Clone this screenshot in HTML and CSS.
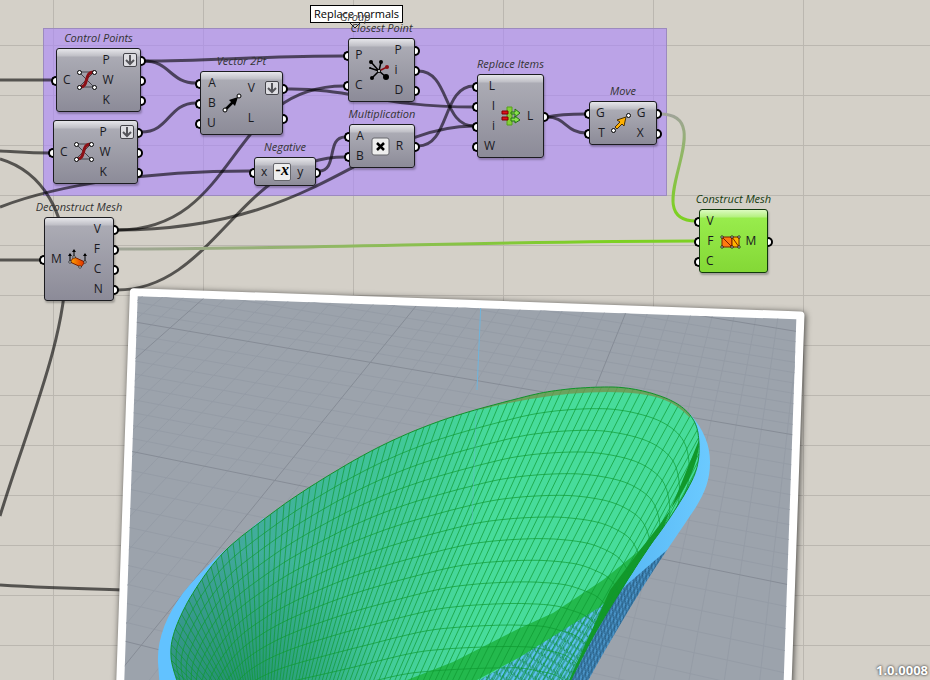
FILE: index.html
```html
<!DOCTYPE html>
<html lang="en">
<head>
    <meta charset="UTF-8">
    <meta name="viewport" content="width=device-width, initial-scale=1.0">
    <title>Replace normals</title>
    <link rel="stylesheet" href="styles.css">
</head>
<body>
    <main class="canvas">
        <div class="group"></div>

        <svg class="wires" aria-hidden="true">
            <defs>
                <linearGradient id="fade-vertices" gradientUnits="userSpaceOnUse" x1="661" y1="114" x2="680" y2="210">
                    <stop offset="0" stop-color="#a0a29b"/>
                    <stop offset="1" stop-color="#7dd023"/>
                </linearGradient>
                <linearGradient id="fade-faces" gradientUnits="userSpaceOnUse" x1="118" y1="0" x2="600" y2="0">
                    <stop offset="0" stop-color="#a0a498"/>
                    <stop offset="1" stop-color="#7dd023"/>
                </linearGradient>
            </defs>
            <path d="M0 80H52"/>
            <path d="M0 151C20 152 30 153 49 153"/>
            <path d="M0 159C44 172 66 215 66 265C66 340 26 430 0 516"/>
            <path d="M0 207C60 184 150 171 250 171"/>
            <path d="M0 260H40"/>
            <path d="M0 585C50 588 90 589 122 590"/>
            <path d="M144 61C210 61 260 56 344 56"/>
            <path d="M144 61C170 61 170 83 196 83"/>
            <path d="M141 132C170 132 168 103 196 103"/>
            <path d="M287 89C350 88 380 107 474 107"/>
            <path d="M117 230C240 230 226 86 344 86"/>
            <path d="M117 230C320 230 370 126 474 126"/>
            <path d="M117 290C215 290 240 157 345 157"/>
            <path d="M319 171C338 171 326 137 345 137"/>
            <path d="M418 71C450 71 442 126 474 126"/>
            <path d="M418 146C450 146 442 86 474 86"/>
            <path d="M547 117C560 114 572 114 586 114"/>
            <path d="M547 117C566 117 566 133 586 133"/>
            <path class="to-vertices" d="M660 114C724 114 634 221 696 221"/>
            <path class="to-faces" d="M117 249C310 249 500 241 696 241"/>
        </svg>

        <article class="node second-points" aria-label="Control Points">
            <ul class="inputs"><li>C</li></ul>
            <svg class="icon" viewBox="0 0 20 20"><use href="#icon-points"/></svg>
            <ul class="outputs">
                <li>P <span class="flatten"><svg viewBox="0 0 12 12"><use href="#icon-down"/></svg></span></li>
                <li>W</li>
                <li>K</li>
            </ul>
        </article>

        <article class="node control-points">
            <h2>Control Points</h2>
            <ul class="inputs"><li>C</li></ul>
            <svg class="icon" viewBox="0 0 20 20">
                <g id="icon-points">
                    <path d="M2 2H17L2 17H17M2 2L17 17" fill="none" stroke="#44444a"/>
                    <path d="M2 17C13 18 6 2 17 2" fill="none" stroke="#8c1016" stroke-width="3"/>
                    <g fill="#fff" stroke="#000"><circle cx="2.500" cy="2.500" r="2"/><circle cx="17.500" cy="2.500" r="2"/><circle cx="2.500" cy="17.500" r="2"/><circle cx="17.500" cy="17.500" r="2"/></g>
                </g>
            </svg>
            <ul class="outputs">
                <li>P <span class="flatten"><svg viewBox="0 0 12 12"><path id="icon-down" d="M6 1V10M2 6L6 10L10 6" fill="none" stroke="#55555a" stroke-width="2"/></svg></span></li>
                <li>W</li>
                <li>K</li>
            </ul>
        </article>

        <article class="node vector">
            <h2>Vector 2Pt</h2>
            <ul class="inputs"><li>A</li><li>B</li><li>U</li></ul>
            <svg class="icon" viewBox="0 0 20 20">
                <path d="M3 17L12 8" stroke="#000" stroke-width="2.500"/>
                <path d="M7 7L16 4L13 13Z"/>
                <g fill="#fff" stroke="#000"><circle cx="3" cy="17" r="2"/><circle cx="17" cy="3" r="2"/></g>
            </svg>
            <ul class="outputs">
                <li>V <span class="flatten"><svg viewBox="0 0 12 12"><use href="#icon-down"/></svg></span></li>
                <li>L</li>
            </ul>
        </article>

        <article class="node negative">
            <h2>Negative</h2>
            <ul class="inputs"><li>x</li></ul>
            <span class="key">-x</span>
            <ul class="outputs"><li>y</li></ul>
        </article>

        <article class="node closest">
            <h2>Closest Point</h2>
            <ul class="inputs"><li>P</li><li>C</li></ul>
            <svg class="icon" viewBox="0 0 20 20">
                <path d="M10 11L2 2M10 11L12 2M10 11L1 8M10 11L3 18M10 11L17 17" stroke="#000" stroke-width="1.500"/>
                <path d="M10 11L18 7" stroke="#8c1016" stroke-width="1.500"/>
                <circle cx="2" cy="2" r="2"/><circle cx="12" cy="2" r="2"/><circle cx="1" cy="8" r="1"/><circle cx="3" cy="18" r="2"/><circle cx="17" cy="17" r="3"/>
                <circle cx="18" cy="7" r="2" fill="#8c1016"/>
                <circle cx="10" cy="11" r="1.500" fill="#fff" stroke="#000"/>
            </svg>
            <ul class="outputs"><li>P</li><li>i</li><li>D</li></ul>
        </article>

        <article class="node multiply">
            <h2>Multiplication</h2>
            <ul class="inputs"><li>A</li><li>B</li></ul>
            <svg class="icon" viewBox="0 0 20 20">
                <rect x="2" y="2" width="17" height="17" rx="2" fill="#eee" stroke="#66666c"/>
                <path d="M7 7L14 14M14 7L7 14" stroke="#000" stroke-width="2.500"/>
            </svg>
            <ul class="outputs"><li>R</li></ul>
        </article>

        <article class="node replace">
            <h2>Replace Items</h2>
            <ul class="inputs"><li>L</li><li>I</li><li>i</li><li>W</li></ul>
            <svg class="icon" viewBox="0 0 20 20">
                <path d="M6 1H11V19H6Z" fill="#86cf35" stroke="#55a01c"/>
                <path d="M10 6H14V3L19 7L14 11V8H10ZM10 12H14V10L19 14L14 17V15H10Z" fill="#8ae04c" stroke="#237012"/>
                <path d="M1 5H7V8H1ZM1 11H7V14H1Z" fill="#e0101c" stroke="#800000"/>
            </svg>
            <ul class="outputs"><li>L</li></ul>
        </article>

        <article class="node move">
            <h2>Move</h2>
            <ul class="inputs"><li>G</li><li>T</li></ul>
            <svg class="icon" viewBox="0 0 20 20">
                <path d="M4 14L9 9L6 7L15 4L13 13L11 11L6 16Z" fill="#ffb000" stroke="#4a3000"/>
                <g fill="#fff" stroke="#000"><circle cx="2.500" cy="17.500" r="2"/><circle cx="17.500" cy="2.500" r="2"/></g>
            </svg>
            <ul class="outputs"><li>G</li><li>X</li></ul>
        </article>

        <article class="node construct">
            <h2>Construct Mesh</h2>
            <ul class="inputs"><li>V</li><li>F</li><li>C</li></ul>
            <svg class="icon" viewBox="0 0 20 20">
                <path d="M2 6H12V16H2Z" fill="#ff7a10" stroke="#7a2000"/>
                <path d="M12 6H19V16H12Z" fill="#ffb400" stroke="#7a2000"/>
                <path d="M2 6L12 16M12 6L19 16" stroke="#7a2000"/>
                <path d="M1 5H3V7H1ZM11 5H13V7H11ZM18 5H20V7H18ZM1 15H3V17H1ZM11 15H13V17H11ZM18 15H20V17H18Z" fill="#fff" stroke="#000" stroke-width=".700"/>
            </svg>
            <ul class="outputs"><li>M</li></ul>
        </article>

        <article class="node deconstruct">
            <h2>Deconstruct Mesh</h2>
            <ul class="inputs"><li>M</li></ul>
            <svg class="icon" viewBox="0 0 20 20">
                <defs>
                    <linearGradient id="ember"><stop offset="0" stop-color="#ffa800"/><stop offset="1" stop-color="#e02800"/></linearGradient>
                </defs>
                <path d="M2 13L6 8L17 13L13 18Z" fill="url(#ember)" stroke="#7a2000"/>
                <path d="M2 13V5M6 8V1M17 13V5" stroke="#000"/>
                <path d="M0 7L2 4L4 7ZM4 3L6 0L8 3ZM15 7L17 4L19 7Z"/>
                <g fill="#fff" stroke="#000" stroke-width=".700"><circle cx="2" cy="13" r="1.200"/><circle cx="6" cy="8" r="1.200"/><circle cx="17" cy="13" r="1.200"/><circle cx="12" cy="18" r="1.200"/></g>
            </svg>
            <ul class="outputs"><li>V</li><li>F</li><li>C</li><li>N</li></ul>
        </article>

        <p class="note">Replace normals</p>
        <svg class="note-tip" viewBox="0 0 12 8" aria-hidden="true"><path d="M1 1L6 6L11 1" fill="none" stroke="#222"/></svg>
        <p class="group-name">Group</p>

        <figure class="preview">
            <svg class="viewport" role="img" aria-label="Offset mesh in the perspective view">
                <defs>
                    <linearGradient id="skin" gradientUnits="userSpaceOnUse" x1="190" y1="560" x2="480" y2="600">
                        <stop offset="0" stop-color="#439f9f"/>
                        <stop offset=".5" stop-color="#3fbf98"/>
                        <stop offset="1" stop-color="#47dc9b"/>
                    </linearGradient>
                    <radialGradient id="throat" gradientUnits="userSpaceOnUse" cx="235" cy="700" r="150">
                        <stop offset="0" stop-color="#0c7d4c" stop-opacity=".6"/>
                        <stop offset="1" stop-color="#0c7d4c" stop-opacity="0"/>
                    </radialGradient>
                    <linearGradient id="shell" gradientUnits="userSpaceOnUse" x1="600" y1="0" x2="712" y2="0">
                        <stop offset="0" stop-color="#52b4f2"/>
                        <stop offset="1" stop-color="#6ccaff"/>
                    </linearGradient>
                    <pattern id="weave" width="4" height="6" patternUnits="userSpaceOnUse" patternTransform="rotate(28)">
                        <path d="M1 0V6M0 0L4 6" stroke="#23577c" stroke-width="1"/>
                    </pattern>
                    <pattern id="hatch" width="4" height="8" patternUnits="userSpaceOnUse" patternTransform="rotate(32)">
                        <path d="M1 0V8M0 2L4 5" stroke="#128a4c" stroke-width="1"/>
                    </pattern>
                    <clipPath id="rim-clip"><path id="rim-shape"/></clipPath>
                </defs>
                <!-- undo the frame's tilt, so the scene is drawn in canvas coordinates -->
                <g transform="translate(-8 -8) rotate(-2) translate(-130 -288)">
                    <path id="floor-minor" class="floor-minor"/>
                    <path id="floor-major" class="floor-major"/>
                    <path class="axis" d="M481 300L477 390"/>
                    <path fill="#62c2ff" d="M265 517C235 541 205 565 183 593C166 616 157 640 158 662L162 720H230L200 600Z"/>
                    <path fill="url(#shell)" d="M690 414C704 430 710 445 710 462C710 480 705 492 696 507C688 519 676 537 667 550C640 587 608 640 572 710H540L600 600L660 500Z"/>
                    <path fill="#4a94c8" d="M667 550C644 584 612 636 572 710H552L600 620L623 588Z"/>
                    <path fill="url(#weave)" d="M667 550C644 584 612 636 572 710H552L600 620L623 588Z"/>
                    <g clip-path="url(#rim-clip)">
                        <path fill="url(#skin)" d="M120 370H720V700H120Z"/>
                        <path fill="url(#throat)" d="M120 370H720V700H120Z"/>
                        <path fill="#5cc0ee" d="M430 708L520 657L620 592L560 700Z"/>
                        <path fill="url(#hatch)" d="M430 708L520 657L620 592L560 700Z"/>
                        <path fill="#23b94d" d="M360 700L407 680L453 662L520 628L553 613L603 580L640 550L665 520L640 570L600 607L520 657L477 680L440 700Z"/>
                        <path fill="#12992a" d="M699 440C699 470 680 500 640 550L610 590L560 700H580L650 560Z"/>
                        <path id="mesh-lines" class="mesh-lines"/>
                        <path fill="none" stroke="#74934f" stroke-width="7" stroke-opacity=".8" d="M480 406C560 386 630 384 664 396Q680 402 692 415"/>
                        <path class="axis faint" d="M477 390L472 525"/>
                    </g>
                    <path id="rim-line" class="rim-line"/>
                </g>
            </svg>
        </figure>

        <p class="version">1.0.0008</p>
    </main>

    <script>
        // rim of the bowl and, point for point, where its ribs run to in the throat
        const rim = [[178, 684], [171, 657], [175, 630], [193, 593], [223, 553], [263, 520], [310, 487], [377, 448],
            [443, 420], [520, 398], [560, 390], [603, 387], [633, 389], [663, 397], [683, 408], [695, 423],
            [699, 443], [697, 467], [687, 490], [667, 522], [647, 550], [620, 592], [593, 637], [566, 690]];
        const throat = [[235, 730], [237, 724], [240, 720], [245, 715], [252, 710], [262, 705], [280, 700], [310, 695],
            [345, 688], [400, 675], [432, 671], [465, 669], [492, 668], [520, 668], [538, 671], [555, 675],
            [568, 684], [577, 694], [583, 704], [587, 711], [590, 717], [592, 725], [592, 735], [590, 745]];

        // Catmull-Rom point at t (0..1) along a list of points
        function along(points, t) {
            const s = t * (points.length - 1);
            const i = Math.min(Math.floor(s), points.length - 2);
            const f = s - i;
            const p = [i - 1, i, i + 1, i + 2].map(n => points[Math.max(0, Math.min(points.length - 1, n))]);
            return [0, 1].map(k => 0.5 * (2 * p[1][k] + (p[2][k] - p[0][k]) * f
                + (2 * p[0][k] - 5 * p[1][k] + 4 * p[2][k] - p[3][k]) * f * f
                + (3 * p[1][k] - p[0][k] - 3 * p[2][k] + p[3][k]) * f * f * f));
        }

        function surface(t, v) {
            const a = along(rim, t);
            const b = along(throat, t);
            return [a[0] + (b[0] - a[0]) * v, a[1] + (b[1] - a[1]) * v];
        }

        function toPath(points) {
            return 'M' + points.map(p => p[0].toFixed(1) + ' ' + p[1].toFixed(1)).join('L');
        }

        function range(n, fn) {
            return Array.from({ length: n + 1 }, (_, i) => fn(i / n));
        }

        const rimPath = toPath(range(200, t => along(rim, t)));
        document.getElementById('rim-shape').setAttribute('d', rimPath + 'Z');
        document.getElementById('rim-line').setAttribute('d', rimPath);

        let mesh = '';
        for (let i = 1; i <= 14; i++) {
            mesh += toPath(range(120, t => surface(t, i / 13)));
        }

        // ribs stand at even steps of the rim's length
        let travelled = 0;
        let last = surface(0, 0);
        range(1200, t => {
            const p = surface(t, 0);
            travelled += Math.hypot(p[0] - last[0], p[1] - last[1]);
            last = p;
            if (travelled >= 8) {
                travelled -= 8;
                mesh += toPath([p, surface(t, 1.1)]);
            }
        });
        document.getElementById('mesh-lines').setAttribute('d', mesh);

        // floor grid: ends of the major lines, ten cells between two of them
        const steep = [[4, -585], [213, -240], [429, 105], [635, 473], [845, 830]];
        const shallow = [[222, 332], [321, 436], [450, 587], [640, 810]];
        let major = '';
        let minor = '';

        function addLines(ends, draw) {
            ends.forEach((end, i) => {
                major += draw(end[0], end[1]);
                if (i === ends.length - 1) return;
                const next = ends[i + 1];
                for (let k = 1; k < 10; k++) {
                    minor += draw(end[0] + (next[0] - end[0]) * k / 10, end[1] + (next[1] - end[1]) * k / 10);
                }
            });
        }

        addLines(steep, (a, b) => `M${a} 290L${b} 690`);
        addLines(shallow, (a, b) => `M100 ${a - 5}L800 ${b}`);
        document.getElementById('floor-major').setAttribute('d', major);
        document.getElementById('floor-minor').setAttribute('d', minor);
    </script>
</body>
</html>
```
FILE: styles.css
```css
*,
*::before {
    box-sizing: border-box;
}

body {
    margin: 0;
    font-family: "Open Sans", "Noto Sans", sans-serif;
    font-size: 12px;
    color: #1a1a1f;
}

h2, p, ul, figure {
    margin: 0;
    padding: 0;
}

.canvas {
    position: relative;
    min-height: 100vh;
    overflow: hidden;
    background-color: #d4d0c8;
    background-image:
        linear-gradient(to right, #bbb7b0 1px, transparent 1px),
        linear-gradient(to bottom, #bbb7b0 1px, transparent 1px);
    background-size: 150px 50px;
    background-position: 53px 45px;
}

.group {
    position: absolute;
    left: 43px;
    top: 28px;
    width: 624px;
    height: 168px;
    background-color: rgba(170, 133, 252, 0.6);
    border: 1px solid #9c8abf;
}

.wires {
    position: absolute;
    left: 0;
    top: 0;
    width: 100%;
    height: 100%;
}

.wires path {
    fill: none;
    stroke: rgba(0, 0, 0, 0.6);
    stroke-width: 3;
}

.wires .to-vertices {
    stroke: url(#fade-vertices);
}

.wires .to-faces {
    stroke: url(#fade-faces);
}

/* components */

.node {
    position: absolute;
    display: flex;
    gap: 6px;
    min-height: 29px;
    padding: 1px 0;
    border: 1px solid #1c1c20;
    border-radius: 3px;
    background: linear-gradient(#e6e6ea 0, #bfbfc6 7px, #ababb4 8px, #8c8b98 100%);
    box-shadow: 1px 2px 2px rgba(0, 0, 0, 0.25);
}

.node h2 {
    position: absolute;
    left: 50%;
    bottom: 100%;
    transform: translateX(-50%);
    font-size: 11px;
    font-weight: normal;
    font-style: italic;
    line-height: 22px;
    white-space: nowrap;
    color: #333;
}

.node ul {
    display: flex;
    flex-direction: column;
    list-style: none;
}

.node li {
    position: relative;
    display: flex;
    flex: 1;
    align-items: center;
    min-height: 20px;
    line-height: 16px;
}

.node li::before {
    content: "";
    position: absolute;
    top: calc(50% - 4px);
    width: 5px;
    height: 10px;
    border: 2px solid #000;
    background-color: #fff;
}

.node .inputs li {
    justify-content: flex-end;
    padding-left: 6px;
}

.node .inputs li::before {
    left: -6px;
    border-right: none;
    border-radius: 5px 0 0 5px;
}

.node .outputs {
    flex: 1;
}

.node .outputs li::before {
    right: -6px;
    border-left: none;
    border-radius: 0 5px 5px 0;
}

.icon {
    align-self: center;
    flex: none;
    width: 20px;
    height: 20px;
    overflow: visible;
}

.key {
    align-self: center;
    flex: none;
    width: 18px;
    height: 18px;
    border: 1px solid #66666c;
    border-radius: 2px;
    background-color: #eee;
    font: italic bold 16px/12px "Liberation Serif", serif;
    text-align: center;
    color: #000;
}

.flatten {
    display: flex;
    width: 14px;
    height: 14px;
    margin-left: auto;
    margin-right: 3px;
    border: 1px solid #44444a;
    border-radius: 2px;
    background-color: #dedee2;
}

.control-points {
    left: 56px;
    top: 48px;
    width: 85px;
}

.second-points {
    left: 53px;
    top: 120px;
    width: 85px;
}

.vector {
    left: 200px;
    top: 71px;
    width: 83px;
}

.negative {
    left: 254px;
    top: 157px;
    width: 62px;
}

.closest {
    left: 348px;
    top: 38px;
    width: 67px;
}

.multiply {
    left: 349px;
    top: 124px;
    width: 66px;
}

.replace {
    left: 477px;
    top: 74px;
    width: 67px;
}

.move {
    left: 589px;
    top: 101px;
    width: 68px;
}

.construct {
    left: 699px;
    top: 209px;
    width: 69px;
    border-color: #10380a;
    background: linear-gradient(#dcfbc0 0, #b4f080 7px, #98ec4c 8px, #84d836 100%);
}

.construct h2 {
    color: #163c10;
}

.deconstruct {
    left: 44px;
    top: 217px;
    width: 70px;
}

/* group label */

.note {
    position: absolute;
    left: 310px;
    top: 5px;
    padding: 0 3px;
    border: 1px solid #000;
    background-color: #fff;
    font-size: 11px;
    line-height: 16px;
    white-space: nowrap;
    color: #000;
}

.note-tip {
    position: absolute;
    left: 349px;
    top: 22px;
    width: 12px;
    height: 8px;
}

.group-name {
    position: absolute;
    left: 340px;
    top: 9px;
    font-size: 11px;
    font-style: italic;
    line-height: 16px;
    color: #444;
}

/* picture of the result */

.preview {
    position: absolute;
    left: 130px;
    top: 288px;
    width: 675px;
    height: 480px;
    border: 8px solid #fff;
    border-radius: 4px;
    background-color: #9ca3ac;
    box-shadow: 1px 1px 6px rgba(0, 0, 0, 0.7);
    transform: rotate(2deg);
    transform-origin: left top;
}

.viewport {
    display: block;
    width: 100%;
    height: 100%;
}

.floor-minor {
    stroke: #959ca6;
}

.floor-major {
    stroke: #868c96;
}

.axis {
    stroke: #6fb4dc;
}

.faint {
    opacity: 0.4;
}

.mesh-lines {
    fill: none;
    stroke: #0f9a32;
    stroke-opacity: 0.7;
    stroke-width: 1;
}

.rim-line {
    fill: none;
    stroke: #12912a;
    stroke-width: 1;
}

.version {
    position: absolute;
    right: 2px;
    bottom: 2px;
    font-size: 13px;
    font-weight: bold;
    line-height: 16px;
    color: #fff;
    text-shadow: 0 0 3px #555, 0 0 2px #555;
}
```
